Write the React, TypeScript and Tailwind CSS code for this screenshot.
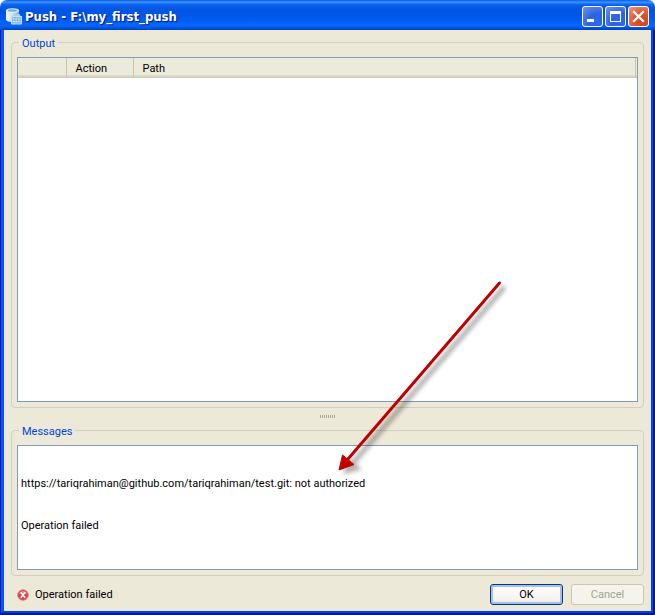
import React, { useState } from 'react';

interface LogEntry {
  action: string;
  path: string;
}

const entries: LogEntry[] = [];

const messages = [
  '',
  '',
  'https://tariqrahiman@github.com/tariqrahiman/test.git: not authorized',
  '',
  '',
  'Operation failed',
].join('\n');

const captionButton =
  'flex h-[21px] w-[21px] items-center justify-center rounded-[3px] border border-white';
const blueCaption =
  'bg-[radial-gradient(circle_at_80%_85%,#2a68f0_0%,#2f62e0_45%,#6f95ee_100%)]';

function AppIcon() {
  return (
    <svg width="18" height="18" viewBox="0 0 18 18" aria-hidden="true">
      <defs>
        <linearGradient id="drum" x1="0" x2="1">
          <stop offset="0" stopColor="#f4fafd" />
          <stop offset="0.5" stopColor="#cfdfe8" />
          <stop offset="1" stopColor="#7fa9c8" />
        </linearGradient>
      </defs>
      <path d="M1 2.500v9c0 1.500 2.500 2.500 6.500 2.500s6.500-1 6.500-2.500v-9z" fill="url(#drum)" />
      <ellipse cx="7.500" cy="2.500" rx="6.500" ry="2.300" fill="#e9f5fb" />
      <ellipse cx="7.500" cy="2.500" rx="5" ry="1.300" fill="#68b4de" />
      <path d="M6.500 8h2l1-2h5l1 2h1.500v8h-10.500z" fill="#a9cfeb" />
      <path d="M6.500 8.500h10v7.500h-10z" fill="#86bde6" stroke="#bfe0f5" />
      <path d="M8 11h1.500m1 0H12m1 0h1.500M8 13.500h1.500m1 0H12m1 0h1.500" stroke="#d8effc" />
    </svg>
  );
}

function ErrorIcon() {
  return (
    <svg width="12" height="12" viewBox="0 0 12 12" aria-hidden="true">
      <circle cx="6" cy="6" r="5.300" fill="#e2404a" stroke="#c98086" strokeWidth="0.800" />
      <path d="M2 5a4.200 4.200 0 0 1 8 0z" fill="#f07c80" />
      <path d="M3.800 3.300l4.400 5.400M8.200 3.300L3.800 8.700" stroke="#fff" strokeWidth="1.500" />
    </svg>
  );
}

function Arrow() {
  return (
    <svg
      className="pointer-events-none absolute left-[330px] top-[275px]"
      width="185"
      height="210"
      viewBox="0 0 185 210"
      aria-hidden="true"
    >
      <defs>
        <filter id="soft" x="-10%" y="-10%" width="120%" height="120%">
          <feGaussianBlur stdDeviation="2" />
        </filter>
      </defs>
      <g transform="translate(5 4)" filter="url(#soft)" opacity="0.300">
        <path d="M169.500 8L18 184" stroke="#000" strokeWidth="5" />
        <path d="M9 195L13 179L26 190z" fill="#000" stroke="#000" />
      </g>
      <path d="M169.500 8L18 184" stroke="#c00000" strokeWidth="3" strokeLinecap="round" />
      <path d="M9 195L12.500 180L24 189.500z" fill="#c00000" stroke="#c00000" />
    </svg>
  );
}

export default function App() {
  const [open, setOpen] = useState(true);

  if (!open) {
    return null;
  }

  return (
    <div className="relative flex h-screen flex-col overflow-hidden rounded-t-[7px] font-['Roboto',sans-serif] text-[11px] leading-[14px] text-black">
      <header className="flex h-[30px] shrink-0 items-center bg-[linear-gradient(to_bottom,#0a5be0_0%,#3a93ff_7%,#0b60ee_16%,#0054e3_35%,#0058ee_60%,#0468ff_85%,#0050dc_94%,#0040bb_100%)] pl-[5px] pr-[6px] pt-[3px]">
        <AppIcon />
        <h1 className="ml-[2px] flex-1 font-['DejaVu_Sans_Condensed','DejaVu_Sans',sans-serif] text-[13px] font-bold text-white [text-shadow:1px_1px_1px_#0a1883]">
          Push - F:\my_first_push
        </h1>
        <div className="flex gap-[2px]">
          <button type="button" aria-label="Minimize" className={`${captionButton} ${blueCaption}`}>
            <svg width="19" height="19" viewBox="0 0 19 19">
              <path d="M4 12h7v3H4z" fill="#fff" />
            </svg>
          </button>
          <button type="button" aria-label="Maximize" className={`${captionButton} ${blueCaption}`}>
            <svg width="19" height="19" viewBox="0 0 19 19">
              <path d="M4 4h11v11H4zM5 7v7h9V7z" fill="#fff" fillRule="evenodd" />
            </svg>
          </button>
          <button
            type="button"
            aria-label="Close"
            onClick={() => setOpen(false)}
            className={`${captionButton} bg-[radial-gradient(circle_at_80%_85%,#d8431c_0%,#dd5330_45%,#ec9a84_100%)]`}
          >
            <svg width="19" height="19" viewBox="0 0 19 19">
              <path d="M5 5l9 9M14 5l-9 9" stroke="#fff" strokeWidth="2.200" strokeLinecap="square" />
            </svg>
          </button>
        </div>
      </header>

      <div className="flex min-h-0 flex-1 flex-col border-b-2 border-l border-r-2 border-b-[#00159c] border-l-[#0019cf] border-r-[#00159c]">
        <main className="flex min-h-0 flex-1 flex-col border-b-2 border-l-[3px] border-r-2 border-b-[#0042e0] border-l-[#0855e8] border-r-[#0046f0] bg-[#ece9d8] px-[7px] pb-[6px] pt-[4px]">
          <fieldset className="grid min-h-0 min-w-0 flex-1 rounded-[4px] border border-[#d0d0bf] px-[5px] pb-[5px] pt-[7px]">
            <legend className="ml-[2px] px-[3px] pt-[4px] leading-[12px] text-[#0046d5]">Output</legend>
            <div className="min-h-0 overflow-auto border border-[#7f9db9] bg-white">
              <table className="w-full table-fixed border-collapse text-left">
                <thead>
                  <tr className="h-5 bg-[linear-gradient(to_bottom,#ebeadb_0px,#ebeadb_17px,#e2decd_17px,#d6d2c2_19px,#cbc7b8_20px)]">
                    <th className="w-12 border-r border-[#c7c5b2]" />
                    <th className="w-[67px] border-r border-[#c7c5b2] pl-[9px] pt-[2px] font-normal">Action</th>
                    <th className="border-r border-[#c7c5b2] pl-[9px] pt-[2px] font-normal">Path</th>
                    <th className="w-[2px]" />
                  </tr>
                </thead>
                <tbody>
                  {entries.map((entry) => (
                    <tr key={entry.path}>
                      <td />
                      <td className="pl-[9px]">{entry.action}</td>
                      <td className="pl-[9px]">{entry.path}</td>
                      <td />
                    </tr>
                  ))}
                </tbody>
              </table>
            </div>
          </fieldset>

          <div className="flex h-[14px] shrink-0 items-end justify-center pb-[4px]">
            <div className="h-[3px] w-[15px] bg-[repeating-linear-gradient(to_right,#aca899_0px,#aca899_1px,#ece9d8_1px,#ece9d8_2px)]" />
          </div>

          <fieldset className="grid min-w-0 shrink-0 rounded-[4px] border border-[#d0d0bf] px-[5px] pb-[5px] pt-[7px]">
            <legend className="ml-[2px] px-[3px] pt-[4px] leading-[12px] text-[#0046d5]">
              <label htmlFor="messages">Messages</label>
            </legend>
            <textarea
              id="messages"
              readOnly
              value={messages}
              className="h-[125px] w-full resize-none border border-[#7f9db9] bg-white px-[3px] py-[3px] outline-none"
            />
          </fieldset>

          <footer className="flex shrink-0 items-center gap-2 pt-2">
            <div className="flex flex-1 items-center gap-[6px] pl-[6px]">
              <ErrorIcon />
              <span>Operation failed</span>
            </div>
            <button
              type="button"
              onClick={() => setOpen(false)}
              className="h-[21px] w-[73px] rounded-[3px] border border-[#003c74] bg-[linear-gradient(to_bottom,#ffffff,#f3f2ec_80%,#e6e3da)] shadow-[inset_0_0_0_2px_#a5c0f0]"
            >
              OK
            </button>
            <button
              type="button"
              disabled
              className="h-[21px] w-[73px] rounded-[3px] border border-[#c9c7ba] bg-[#f5f4ea] text-[#a1a192]"
            >
              Cancel
            </button>
          </footer>
        </main>
      </div>

      <Arrow />
    </div>
  );
}
